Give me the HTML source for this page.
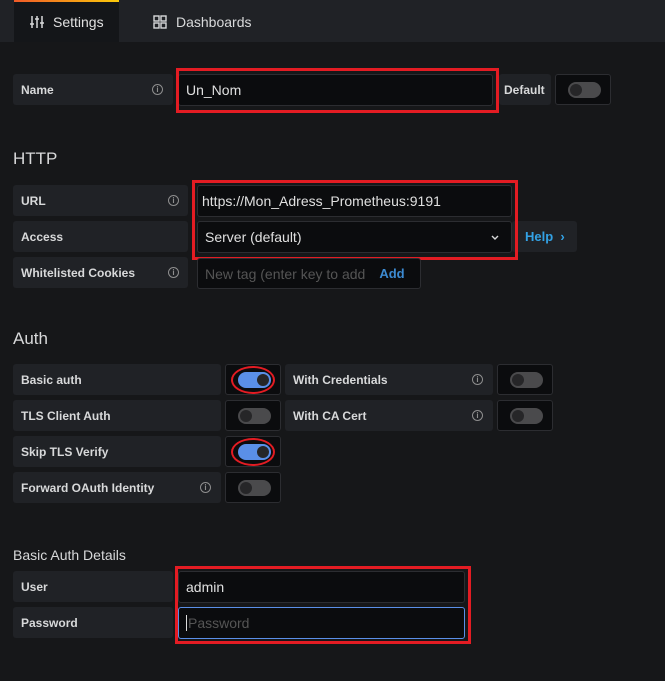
<!DOCTYPE html><html><head><style>
*{box-sizing:border-box;margin:0;padding:0}
body{width:665px;height:681px;background:#161719;font-family:"Liberation Sans",sans-serif;position:relative;overflow:hidden;color:#d8d9da}
.a{position:absolute}
.tabs{left:0;top:0;width:665px;height:42px;background:#202226}
.lab{background:#202226;border-radius:3px;font-size:12px;font-weight:bold;color:#d8d9da;padding-left:8px;display:flex;align-items:center}
.inp{background:#0b0c0e;border:1px solid #2c2d31;border-radius:3px;font-size:14px;color:#e0e0e0;padding-left:7px;display:flex;align-items:center}
.tb{background:#0b0c0e;border:1px solid #2c2d31;border-radius:3px}
.tg{position:absolute;left:12px;top:7px;width:33px;height:16px;border-radius:8px;background:#4a4a4c}
.tg::after{content:"";position:absolute;left:2px;top:2px;width:12px;height:12px;border-radius:6px;background:#262628}
.on{background:#5a8fe8}.on::after{left:19px}
.i{position:absolute;width:11px;height:11px;border:1.3px solid #8e8e8e;border-radius:50%;font-size:8px;line-height:9px;text-align:center;color:#8e8e8e;font-weight:bold}
.red{border:3px solid #e31c23;position:absolute}
.h{font-size:17px;color:#d8d9da}
.ov{position:absolute;border:2px solid #e31c23;border-radius:50%;width:44px;height:28px}
</style></head><body>
<div class="a tabs"></div>
<div class="a" style="left:14px;top:0;width:105px;height:42px;background:#141619"></div>
<div class="a" style="left:14px;top:0;width:105px;height:2px;background:linear-gradient(90deg,#f05a28,#fbca0a)"></div>
<svg class="a" style="left:30px;top:15px" width="14" height="14" viewBox="0 0 14 14" stroke="#d8d9da" stroke-width="1.5" fill="none"><path d="M2 1v12M7 1v12M12 1v12"/><path d="M0 9h4M5 4h4M10 8h4"/></svg>
<div class="a" style="left:53px;top:14px;font-size:14px;color:#e0e0e0">Settings</div>
<svg class="a" style="left:153px;top:15px" width="14" height="14" viewBox="0 0 14 14" stroke="#d8d9da" stroke-width="1.4" fill="none"><rect x="1" y="1" width="5" height="5"/><rect x="8" y="1" width="5" height="5"/><rect x="1" y="8" width="5" height="5"/><rect x="8" y="8" width="5" height="5"/></svg>
<div class="a" style="left:176px;top:14px;font-size:14px;color:#d8d9da">Dashboards</div>

<div class="a lab" style="left:13px;top:74px;width:160px;height:31px">Name</div><div class="i" style="left:152px;top:84px">i</div>
<div class="a inp" style="left:178px;top:74px;width:315px;height:32px">Un_Nom</div>
<div class="red" style="left:176px;top:68px;width:323px;height:45px"></div>
<div class="a lab" style="left:499px;top:74px;width:52px;height:31px;padding-left:5px">Default</div>
<div class="a tb" style="left:555px;top:74px;width:56px;height:31px"><div class="tg"></div></div>

<div class="a h" style="left:13px;top:149px">HTTP</div>
<div class="a lab" style="left:13px;top:185px;width:175px;height:31px">URL</div><div class="i" style="left:168px;top:195px">i</div>
<div class="a inp" style="left:197px;top:185px;width:315px;height:32px;padding-left:4px">https://Mon_Adress_Prometheus:9191</div>
<div class="a lab" style="left:13px;top:221px;width:175px;height:31px">Access</div>
<div class="a inp" style="left:197px;top:221px;width:315px;height:32px">Server (default)<svg style="position:absolute;right:12px;top:13px" width="8" height="6" viewBox="0 0 8 6"><path d="M1 1l3 3 3-3" stroke="#d8d9da" stroke-width="1.4" fill="none"/></svg></div>
<div class="a lab" style="left:512px;top:221px;width:65px;height:31px;color:#33a2e5;font-size:13px;padding-left:13px">Help &nbsp;›</div>
<div class="red" style="left:192px;top:180px;width:326px;height:80px"></div>
<div class="a lab" style="left:13px;top:257px;width:175px;height:31px">Whitelisted Cookies</div><div class="i" style="left:168px;top:267px">i</div>
<div class="a inp" style="left:197px;top:258px;width:224px;height:31px;color:#555;font-size:14px">New tag (enter key to add<span style="color:#3c8ad1;font-weight:bold;font-size:13px;margin-left:14px">Add</span></div>

<div class="a h" style="left:13px;top:329px">Auth</div>
<div class="a lab" style="left:13px;top:364px;width:208px;height:31px">Basic auth</div>
<div class="a tb" style="left:225px;top:364px;width:56px;height:31px"><div class="tg on"></div></div><div class="ov" style="left:231px;top:366px"></div>
<div class="a lab" style="left:285px;top:364px;width:208px;height:31px">With Credentials</div><div class="i" style="left:472px;top:374px">i</div>
<div class="a tb" style="left:497px;top:364px;width:56px;height:31px"><div class="tg"></div></div>
<div class="a lab" style="left:13px;top:400px;width:208px;height:31px">TLS Client Auth</div>
<div class="a tb" style="left:225px;top:400px;width:56px;height:31px"><div class="tg"></div></div>
<div class="a lab" style="left:285px;top:400px;width:208px;height:31px">With CA Cert</div><div class="i" style="left:472px;top:410px">i</div>
<div class="a tb" style="left:497px;top:400px;width:56px;height:31px"><div class="tg"></div></div>
<div class="a lab" style="left:13px;top:436px;width:208px;height:31px">Skip TLS Verify</div>
<div class="a tb" style="left:225px;top:436px;width:56px;height:31px"><div class="tg on"></div></div><div class="ov" style="left:231px;top:438px"></div>
<div class="a lab" style="left:13px;top:472px;width:208px;height:31px">Forward OAuth Identity</div><div class="i" style="left:200px;top:482px">i</div>
<div class="a tb" style="left:225px;top:472px;width:56px;height:31px"><div class="tg"></div></div>

<div class="a" style="left:13px;top:547px;font-size:14px;color:#d8d9da">Basic Auth Details</div>
<div class="a lab" style="left:13px;top:571px;width:160px;height:31px">User</div>
<div class="a inp" style="left:178px;top:571px;width:287px;height:32px">admin</div>
<div class="a lab" style="left:13px;top:607px;width:160px;height:31px">Password</div>
<div class="a inp" style="left:178px;top:607px;width:287px;height:32px;border-color:#5a8fe8;color:#555"><span style="border-left:1px solid #ddd;padding-left:1px">Password</span></div>
<div class="red" style="left:175px;top:566px;width:296px;height:78px"></div>
</body></html>
